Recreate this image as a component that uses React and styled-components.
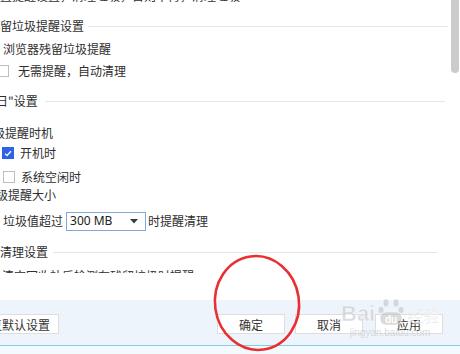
import React from "react";
import styled, { createGlobalStyle } from "styled-components";

const Global = createGlobalStyle`
  html, body { margin: 0; padding: 0; background: #fff; }
  body { font-family: "Noto Sans CJK SC", "Noto Sans", sans-serif; color: #333; }
`;

const Frame = styled.div`
  position: relative;
  width: 460px;
  height: 354px;
  overflow: hidden;
  background: #fff;
  display: flex;
  flex-direction: column;
`;

const Content = styled.div`
  height: 273px;
  flex: none;
  overflow: hidden;
  display: flex;
  flex-direction: column;
  font-size: 12px;
  line-height: 16px;
`;

const Row = styled.div`
  display: flex;
  align-items: center;
  height: ${(p) => p.$h || 16}px;
  margin-top: ${(p) => p.$top}px;
  padding-left: ${(p) => p.$left || 0}px;
  gap: ${(p) => p.$gap || 0}px;
  white-space: nowrap;
  flex: none;
`;

const Label = styled.span`
  margin-left: ${(p) => p.$indent || 0}px;
  color: #2e2e2e;
`;

const Rule = styled.div`
  flex: 1;
  height: 1px;
  background: #e6e6e6;
  margin-left: ${(p) => p.$gap}px;
  margin-right: ${(p) => 460 - p.$end}px;
`;

const Box = styled.span`
  box-sizing: border-box;
  width: 12px;
  height: 12px;
  flex: none;
  border: 1px solid ${(p) => (p.$checked ? "#2f62e6" : "#bdbdbd")};
  background: ${(p) => (p.$checked ? "#2f62e6" : "#fff")};
  margin-left: ${(p) => p.$x}px;
  display: flex;
  align-items: center;
  justify-content: center;
`;

const Check = ({ checked, x, labelGap, children }) => (
  <>
    <Box $checked={checked} $x={x}>
      {checked && (
        <svg width="8" height="7" viewBox="0 0 8 7">
          <path d="M1 3.6 L3 5.5 L7 1.3" stroke="#fff" strokeWidth="1.3" fill="none" />
        </svg>
      )}
    </Box>
    <Label $indent={labelGap}>{children}</Label>
  </>
);

const Select = styled.div`
  box-sizing: border-box;
  width: 80px;
  height: 19px;
  border: 1px solid #80a9d8;
  background: #fff;
  display: flex;
  align-items: center;
  justify-content: space-between;
  padding: 0 7px 0 3px;
  margin: 0 2px 0 3px;
  font-family: "Noto Sans", sans-serif;
  font-size: 12px;
  color: #222;
`;

const Gap = styled.div`
  height: 27px;
  flex: none;
`;

const Footer = styled.div`
  height: 45px;
  flex: none;
  background: #edf4fc;
  display: flex;
  align-items: flex-start;
  padding-top: 14px;
  box-sizing: border-box;
`;

const Button = styled.div`
  box-sizing: border-box;
  width: ${(p) => p.$w || 68}px;
  height: 20px;
  margin-left: ${(p) => p.$ml || 0}px;
  background: #fff;
  border: 1px solid #dedede;
  display: flex;
  align-items: center;
  justify-content: center;
  font-size: 12px;
  color: #333;
  flex: none;
`;

const Strip = styled.div`
  flex: 1;
  border-top: 1px solid #86cde4;
  background: #f3fafd;
`;

const Thumb = styled.div`
  position: absolute;
  left: 451px;
  top: -6px;
  width: 8px;
  height: 79px;
  border-radius: 4px;
  background: #cbcbcb;
`;

const Overlay = styled.svg`
  position: absolute;
  left: 0;
  top: 0;
  pointer-events: none;
`;

const Watermark = styled.div`
  position: absolute;
  left: 341px;
  top: 298px;
  display: flex;
  flex-direction: column;
  align-items: center;
  color: rgba(190, 190, 190, 0.55);
  pointer-events: none;
`;

const MarkTop = styled.div`
  display: flex;
  align-items: flex-end;
  gap: 2px;
  font-family: "Liberation Sans", sans-serif;
  font-weight: bold;
  font-size: 22px;
  line-height: 24px;
  -webkit-text-stroke: 0.6px rgba(255, 255, 255, 0.8);
`;

const MarkCn = styled.span`
  font-family: "Noto Sans CJK SC", sans-serif;
  font-size: 16px;
  font-weight: normal;
  line-height: 22px;
`;

const MarkUrl = styled.div`
  font-family: "Liberation Sans", sans-serif;
  font-size: 10px;
  line-height: 11px;
  margin-top: 1px;
`;

export default function App() {
  return (
    <>
      <Global />
      <Frame>
        <Content>
          <Row $top={-12}>
            <Label>置提醒设置，清理垃圾，否则不再，清理垃圾</Label>
          </Row>
          <Row $top={14}>
            <Label>留垃圾提醒设置</Label>
            <Rule $gap={4} $end={448} />
          </Row>
          <Row $top={7} $left={3}>
            <Label>浏览器残留垃圾提醒</Label>
          </Row>
          <Row $top={6}>
            <Check x={-3} labelGap={9}>无需提醒，自动清理</Check>
          </Row>
          <Row $top={14}>
            <Label $indent={-4}>日"设置</Label>
            <Rule $gap={7} $end={445} />
          </Row>
          <Row $top={16}>
            <Label $indent={-7}>级提醒时机</Label>
          </Row>
          <Row $top={4}>
            <Check checked x={2} labelGap={6}>开机时</Check>
          </Row>
          <Row $top={8}>
            <Check x={3} labelGap={6}>系统空闲时</Check>
          </Row>
          <Row $top={2}>
            <Label $indent={-4}>级提醒大小</Label>
          </Row>
          <Row $top={8} $h={20} $left={3}>
            <Label>垃圾值超过</Label>
            <Select>
              <span>300 MB</span>
              <svg width="8" height="5" viewBox="0 0 8 5">
                <path d="M0 0 H8 L4 4.5 Z" fill="#2e3f52" />
              </svg>
            </Select>
            <Label>时提醒清理</Label>
          </Row>
          <Row $top={13}>
            <Label>清理设置</Label>
            <Rule $gap={5} $end={437} />
          </Row>
          <Row $top={8} $left={2}>
            <Label>清空回收站后检测有残留垃圾时提醒</Label>
          </Row>
        </Content>
        <Gap />
        <Footer>
          <Button $w={90} $ml={-31}>恢复默认设置</Button>
          <Button $ml={158}>确定</Button>
          <Button $ml={10}>取消</Button>
          <Button $ml={12}>应用</Button>
        </Footer>
        <Strip />
        <Thumb />
        <Watermark>
          <MarkTop>
            <span>Bai</span>
            <svg width="28" height="28" viewBox="0 0 28 28">
              <g fill="rgba(190,190,190,0.55)" stroke="rgba(255,255,255,0.8)" strokeWidth="0.6">
                <ellipse cx="9" cy="5" rx="3" ry="4" />
                <ellipse cx="19" cy="5" rx="3" ry="4" />
                <ellipse cx="4" cy="12" rx="3" ry="3.5" />
                <ellipse cx="24" cy="12" rx="3" ry="3.5" />
                <rect x="3" y="14" width="22" height="13" rx="6" />
              </g>
              <text x="14" y="25" textAnchor="middle" fontSize="10" fontFamily="Liberation Sans" fontWeight="bold" fill="#fff">du</text>
            </svg>
            <MarkCn>经验</MarkCn>
          </MarkTop>
          <MarkUrl>jingyan.baidu.com</MarkUrl>
        </Watermark>
        <Overlay width="460" height="354" viewBox="0 0 460 354">
          <ellipse
            cx="257"
            cy="303"
            rx="42"
            ry="47"
            transform="rotate(-8 257 303)"
            fill="none"
            stroke="#ea2f33"
            strokeWidth="2.6"
          />
        </Overlay>
      </Frame>
    </>
  );
}
